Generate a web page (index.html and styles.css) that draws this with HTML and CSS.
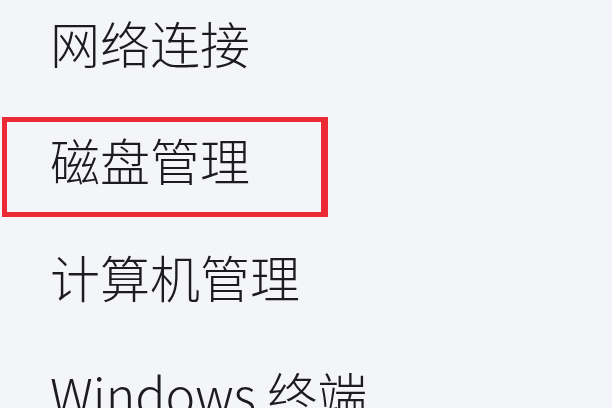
FILE: index.html
```html
<!DOCTYPE html>
<html lang="zh-CN">
<head>
<meta charset="utf-8">
<title>菜单</title>
<link rel="stylesheet" href="styles.css">
</head>
<body>
<div class="menu">
  <div class="item">网络连接</div>
  <div class="item">磁盘管理</div>
  <div class="item">计算机管理</div>
  <div class="item">Windows 终端</div>
  <div class="highlight"></div>
</div>
</body>
</html>
```
FILE: styles.css
```css
html, body {
  margin: 0;
  padding: 0;
  background: #f4f5f9;
  overflow: hidden;
}
body {
  width: 612px;
  height: 408px;
}
.menu {
  position: relative;
  display: flex;
  flex-direction: column;
  margin-top: -17px;
}
.item {
  height: 117px;
  display: flex;
  align-items: center;
  padding-left: 50px;
  font-family: "Noto Sans CJK SC", "Open Sans", sans-serif;
  font-weight: 300;
  font-size: 50px;
  line-height: 1;
  color: #1d1a22;
  white-space: nowrap;
}
.highlight {
  position: absolute;
  left: 2px;
  top: 134px;
  width: 314px;
  height: 90px;
  border: 5px solid #ec2a36;
  border-right-width: 7px;
  box-sizing: content-box;
}
```
